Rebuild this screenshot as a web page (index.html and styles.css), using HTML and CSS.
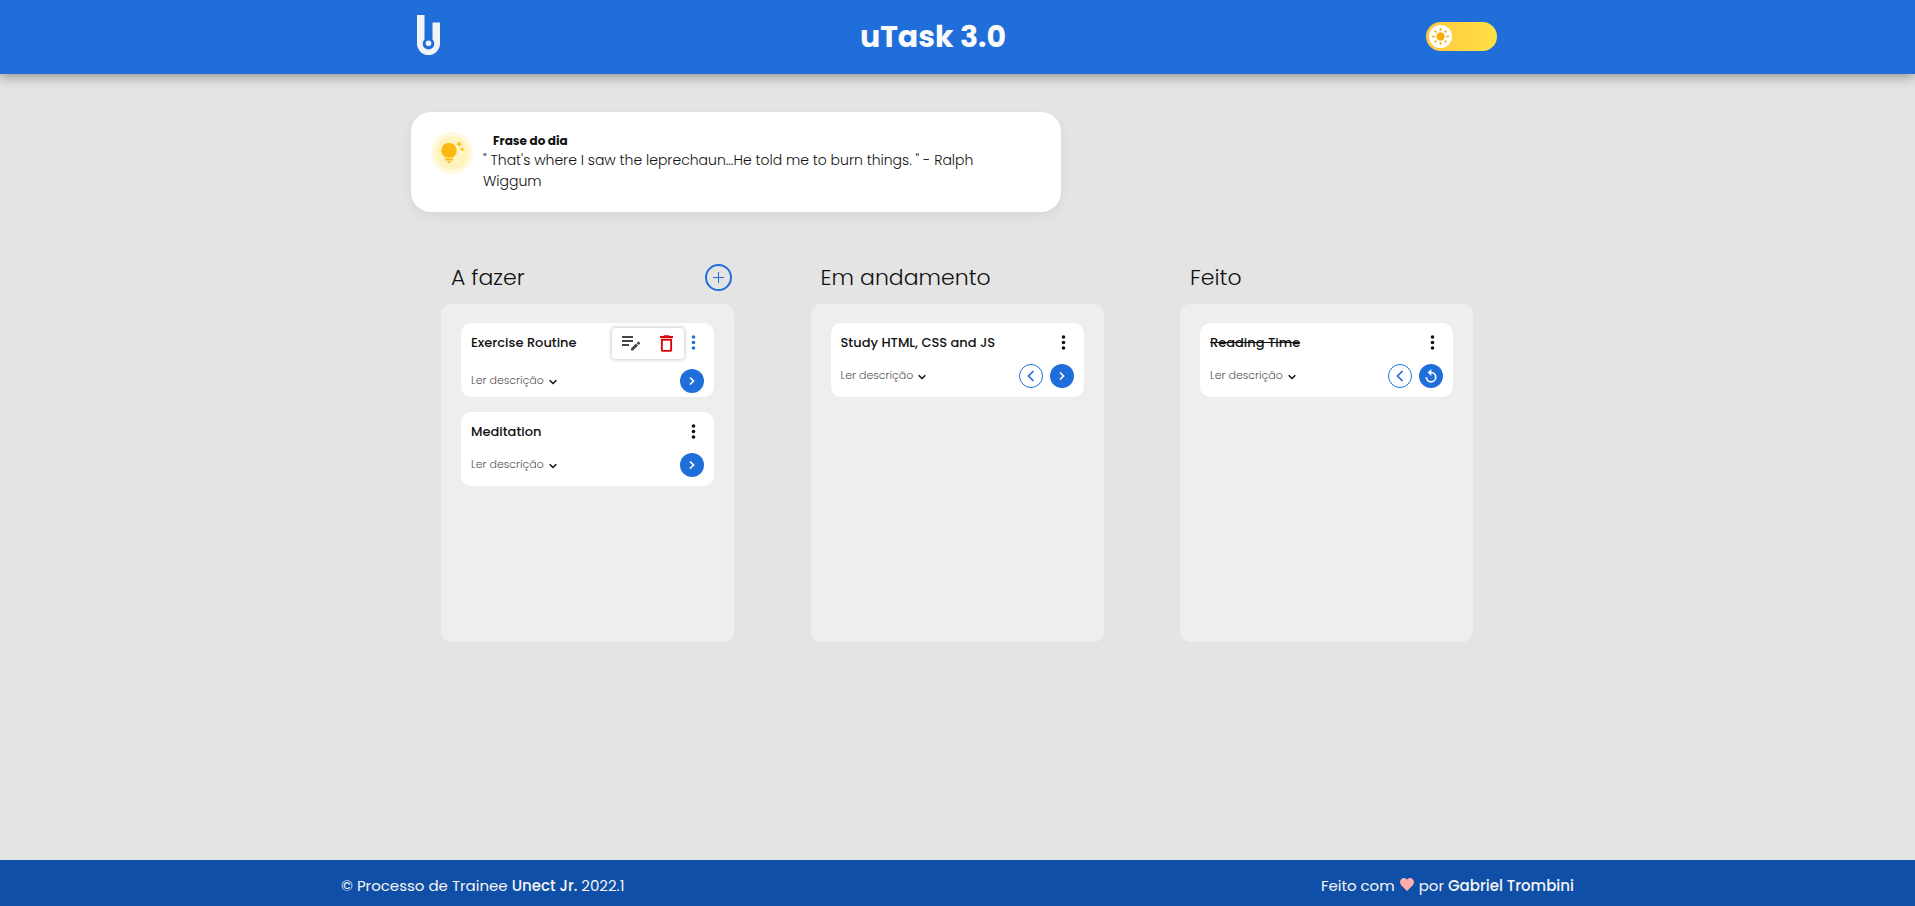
FILE: index.html
```html
<!DOCTYPE html>
<html lang="pt-BR">
<head>
<meta charset="utf-8">
<meta name="viewport" content="width=device-width, initial-scale=1">
<title>uTask 3.0</title>
<link rel="stylesheet" href="styles.css">
</head>
<body>
<svg class="sprite" aria-hidden="true">
  <symbol id="dots" viewBox="0 0 5 15"><circle cx="2.5" cy="2" r="1.8"/><circle cx="2.5" cy="7.5" r="1.8"/><circle cx="2.5" cy="13" r="1.8"/></symbol>
  <symbol id="down" viewBox="0 0 8 6"><path d="M.7 1.2 4 4.5l3.300-3.300" fill="none" stroke="currentColor" stroke-width="1.500"/></symbol>
  <symbol id="next" viewBox="0 0 8 10"><path d="M2 1.500 5.500 5 2 8.500" fill="none" stroke="currentColor" stroke-width="1.700"/></symbol>
  <symbol id="prev" viewBox="0 0 8 12"><path d="M6.500 1 1.500 6l5 5" fill="none" stroke="currentColor" stroke-width="1.700"/></symbol>
</svg>

<header class="topbar">
  <div class="topbar-inner">
    <svg class="logo" viewBox="0 0 23 40" role="img" aria-label="Unect">
      <path d="M0 0h7.500v24.600a5.800 5.800 0 1 0 8 0V7.500H23v21a11.500 11.500 0 0 1-23 0z"/>
      <circle cx="11.500" cy="28.300" r="2.800"/>
    </svg>
    <h1 class="brand">uTask 3.0</h1>
    <label class="theme">
      <input class="theme-input" type="checkbox" aria-label="Alternar tema">
      <svg class="theme-knob" viewBox="0 0 23 23" aria-hidden="true">
        <circle cx="11.500" cy="11.500" r="11.500" fill="#fff"/>
        <circle cx="11.500" cy="11.500" r="4.200" fill="#f9ad0e"/>
        <path d="M11.500 3v3M11.500 17v3M3 11.500h3M17 11.500h3M5.600 5.600l1.800 1.800M15.600 15.600l1.800 1.800M5.600 17.400l1.800-1.800M15.600 7.400l1.800-1.800" stroke="#f9ad0e" stroke-width="1.600"/>
      </svg>
    </label>
  </div>
</header>

<main class="page">
  <section class="quote">
    <svg class="quote-icon" viewBox="0 0 42 42" aria-hidden="true">
      <circle cx="21" cy="21" r="21" fill="#fff9e0"/>
      <circle cx="21" cy="21" r="17" fill="#fff3bf"/>
      <path d="M18 11a7.500 7.500 0 0 0-4.500 13.600V25.500h9v-.9A7.500 7.500 0 0 0 18 11zM14 26.500h8v2h-8zM15.800 29.500h4.400l-1 1.600h-2.400z" fill="#fbb90f"/>
      <path d="M28.200 9l.9 2.300 2.300.9-2.300.9-.9 2.300-.9-2.300-2.300-.9 2.300-.9zM31.200 15l.7 1.600 1.600.7-1.600.7-.7 1.600-.7-1.600-1.600-.7 1.600-.7z" fill="#fbb90f"/>
    </svg>
    <div class="quote-body">
      <h2 class="quote-title">Frase do dia</h2>
      <p class="quote-text">" That's where I saw the leprechaun...He told me to burn things. " - Ralph Wiggum</p>
    </div>
  </section>

  <div class="board">
    <section class="column">
      <div class="column-head">
        <h2 class="column-title">A fazer</h2>
        <button class="add" type="button" aria-label="Adicionar tarefa"><svg viewBox="0 0 11 11"><path d="M5.500 0v11M0 5.500h11"/></svg></button>
      </div>
      <div class="column-list">
        <article class="task task--open">
          <div class="task-head">
            <h3 class="task-title">Exercise Routine</h3>
            <button class="menu menu--active" type="button" aria-label="Opções"><svg><use href="#dots"/></svg></button>
            <div class="popover">
              <button class="tool" type="button" aria-label="Editar"><svg viewBox="0 0 20 18"><path d="M1 1h11v2H1zM1 5h11v2H1zM1 9h7v2H1zM10 13.600l5-5 2 2-5 5h-2zM15.700 7.900l1.200-1.200q.5-.5 1 0l1 1q.5.5 0 1l-1.200 1.200z"/></svg></button>
              <button class="tool tool--delete" type="button" aria-label="Excluir"><svg viewBox="0 0 14 18"><path d="M4.500 0h5l.9 1H14v2H0V1h3.600zM1 4h12v12a2 2 0 0 1-2 2H3a2 2 0 0 1-2-2zM3 6v10h8V6z" fill-rule="evenodd"/></svg></button>
            </div>
          </div>
          <div class="task-foot">
            <button class="describe" type="button">Ler descrição <svg><use href="#down"/></svg></button>
            <button class="move" type="button" aria-label="Avançar"><svg class="i-next"><use href="#next"/></svg></button>
          </div>
        </article>
        <article class="task">
          <div class="task-head">
            <h3 class="task-title">Meditation</h3>
            <button class="menu" type="button" aria-label="Opções"><svg><use href="#dots"/></svg></button>
          </div>
          <div class="task-foot">
            <button class="describe" type="button">Ler descrição <svg><use href="#down"/></svg></button>
            <button class="move" type="button" aria-label="Avançar"><svg class="i-next"><use href="#next"/></svg></button>
          </div>
        </article>
      </div>
    </section>

    <section class="column">
      <div class="column-head"><h2 class="column-title">Em andamento</h2></div>
      <div class="column-list">
        <article class="task">
          <div class="task-head">
            <h3 class="task-title">Study HTML, CSS and JS</h3>
            <button class="menu" type="button" aria-label="Opções"><svg><use href="#dots"/></svg></button>
          </div>
          <div class="task-foot">
            <button class="describe" type="button">Ler descrição <svg><use href="#down"/></svg></button>
            <button class="move move--back" type="button" aria-label="Voltar"><svg class="i-prev"><use href="#prev"/></svg></button>
            <button class="move" type="button" aria-label="Avançar"><svg class="i-next"><use href="#next"/></svg></button>
          </div>
        </article>
      </div>
    </section>

    <section class="column">
      <div class="column-head"><h2 class="column-title">Feito</h2></div>
      <div class="column-list">
        <article class="task">
          <div class="task-head">
            <h3 class="task-title task-title--done">Reading Time</h3>
            <button class="menu" type="button" aria-label="Opções"><svg><use href="#dots"/></svg></button>
          </div>
          <div class="task-foot">
            <button class="describe" type="button">Ler descrição <svg><use href="#down"/></svg></button>
            <button class="move move--back" type="button" aria-label="Voltar"><svg class="i-prev"><use href="#prev"/></svg></button>
            <button class="move" type="button" aria-label="Reiniciar"><svg class="i-redo" viewBox="0 0 12 14"><path d="M6 3.500a4.700 4.700 0 1 1-4.700 4.700" fill="none" stroke="currentColor" stroke-width="1.700"/><path d="M6.300 0v7L2.700 3.500z" fill="currentColor"/></svg></button>
          </div>
        </article>
      </div>
    </section>
  </div>
</main>

<footer class="footer">
  <div class="footer-inner">
    <p>© Processo de Trainee <strong>Unect Jr.</strong> 2022.1</p>
    <p>Feito com <svg class="heart" viewBox="0 0 14 13" role="img" aria-label="amor"><path d="M7 13 1.200 7.200C-.6 5.200-.2 2 1.800.7 3.500-.4 5.800 0 7 1.800 8.200 0 10.500-.4 12.200.7c2 1.300 2.400 4.500.6 6.500z"/></svg> por <strong>Gabriel Trombini</strong></p>
  </div>
</footer>
</body>
</html>
```
FILE: styles.css
```css
* { box-sizing: border-box; margin: 0; padding: 0; }

body {
  display: flex;
  flex-direction: column;
  min-height: 100vh;
  background: #e4e4e4;
  color: #111;
  font-family: Poppins, Inter, "Open Sans", sans-serif;
}

button { border: 0; background: none; font: inherit; color: inherit; cursor: pointer; }
svg { display: block; fill: currentColor; }
.sprite { position: absolute; width: 0; height: 0; }

.topbar { background: #206ed9; box-shadow: 0 2px 12px rgba(0, 0, 0, .4); }
.topbar-inner {
  display: flex;
  align-items: center;
  justify-content: space-between;
  max-width: 1081px;
  min-height: 74px;
  margin: 0 auto;
  padding-right: 1px;
  color: #f5f5f5;
}
.logo { width: 23px; height: 40px; margin-bottom: 4px; color: #f1f3f6; }
.brand { font-size: 30px; font-weight: 700; line-height: 40px; color: #fafafa; }
.theme { position: relative; display: block; margin-bottom: 2px; }
.theme-input {
  display: block;
  appearance: none;
  width: 71px;
  height: 29px;
  border-radius: 15px;
  background: linear-gradient(90deg, #ffc840, #ffe044);
}
.theme-knob { position: absolute; top: 3px; left: 3px; width: 23px; height: 23px; }

.page { flex: 1; width: 100%; max-width: 1093px; margin: 0 auto; padding: 38px 0; }

.quote {
  display: flex;
  gap: 10px;
  max-width: 650px;
  padding: 20px;
  border-radius: 20px;
  background: #fff;
  box-shadow: 0 4px 12px rgba(0, 0, 0, .06);
}
.quote-icon { flex: none; width: 42px; height: 42px; }
.quote-body { flex: 1; padding-right: 20px; }
.quote-title { padding-left: 10px; font-size: 12px; font-weight: 700; line-height: 18px; }
.quote-text { font-size: 14px; font-weight: 300; line-height: 21px; }

.board { display: flex; justify-content: space-between; padding: 48px 31px 0 30px; }
.column { width: 293px; }
.column-head { display: flex; align-items: center; justify-content: space-between; min-height: 34px; padding: 0 2px 0 10px; margin-bottom: 10px; }
.column-title { padding-top: 2px; font-size: 22px; font-weight: 300; line-height: 32px; }
.add {
  display: grid;
  place-items: center;
  width: 27px;
  height: 27px;
  border: 2px solid #206ed9;
  border-radius: 50%;
}
.add svg { width: 11px; height: 11px; stroke: #206ed9; stroke-width: 1; }
.column-list {
  display: flex;
  flex-direction: column;
  gap: 15px;
  min-height: 338px;
  padding: 19px 20px;
  border-radius: 10px;
  background: #eee;
}

.task { min-height: 74px; padding: 7px 10px 4px; border-radius: 10px; background: #fff; }
.task-head { position: relative; display: flex; align-items: center; justify-content: space-between; min-height: 25px; }
.task-title { font-size: 13px; font-weight: 500; line-height: 20px; }
.task-title--done { text-decoration: line-through; }
.menu { padding: 2px 8px; }
.menu svg { width: 5px; height: 15px; }
.menu--active { color: #206ed9; }
.popover {
  position: absolute;
  top: -2px;
  right: 20px;
  display: flex;
  align-items: center;
  justify-content: space-between;
  width: 72px;
  height: 31px;
  padding: 0 11px 0 9px;
  border-radius: 4px;
  background: #fff;
  color: #444;
  box-shadow: 0 0 4px rgba(0, 0, 0, .3);
}
.tool svg { width: 20px; height: 18px; }
.tool--delete { color: #e00008; }
.tool--delete svg { width: 13px; height: 17px; }
.task-foot { display: flex; align-items: center; gap: 7px; margin-top: 9px; }
.task--open .task-foot { margin-top: 14px; }
.task--open { padding-bottom: 0; }
.describe { display: flex; align-items: center; gap: 5px; margin-right: auto; padding-bottom: 2px; font-size: 11px; font-weight: 300; line-height: 16px; color: #555; }
.describe svg { width: 8px; height: 6px; margin-top: 4px; color: #111; }
.move {
  display: grid;
  place-items: center;
  width: 24px;
  height: 24px;
  border-radius: 50%;
  background: #206ed9;
  color: #fff;
}
.move--back { border: 1px solid #206ed9; background: #fff; color: #206ed9; }
.i-next { width: 8px; height: 10px; }
.i-prev { width: 8px; height: 12px; }
.i-redo { width: 12px; height: 14px; }

.footer { background: #104fa7; color: #f5f5f5; }
.footer-inner {
  display: flex;
  align-items: center;
  justify-content: space-between;
  max-width: 1233px;
  min-height: 46px;
  margin: 0 auto;
  padding-top: 6px;
  font-size: 15px;
  font-weight: 400;
  line-height: 24px;
}
.footer strong { font-weight: 500; }
.heart { display: inline-block; width: 14px; height: 13px; margin: 0 1px; color: #ffadad; }
```
